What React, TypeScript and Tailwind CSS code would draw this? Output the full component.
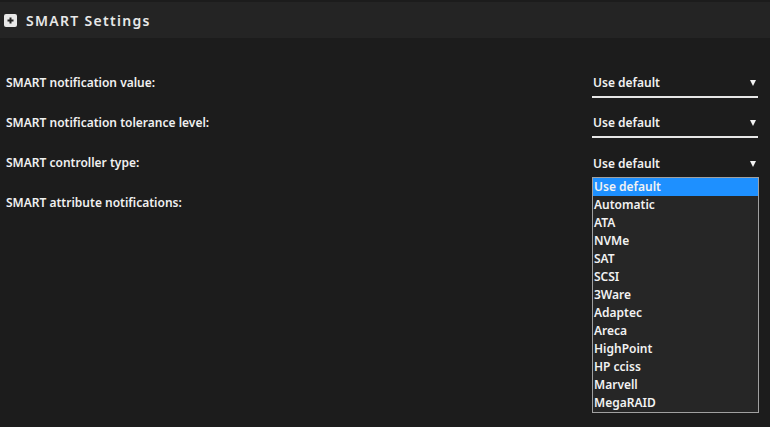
const options = [
  "Use default",
  "Automatic",
  "ATA",
  "NVMe",
  "SAT",
  "SCSI",
  "3Ware",
  "Adaptec",
  "Areca",
  "HighPoint",
  "HP cciss",
  "Marvell",
  "MegaRAID",
];

const rows = [
  "SMART notification value:",
  "SMART notification tolerance level:",
  "SMART controller type:",
  "SMART attribute notifications:",
];

function Caret() {
  return (
    <svg width="6" height="6" viewBox="0 0 6 6" className="shrink-0">
      <path d="M0 0 H6 L3 6 Z" fill="#f2f2f2" />
    </svg>
  );
}

function Select({ open, last }: { open?: boolean; last?: boolean }) {
  return (
    <div className="relative w-[166px]">
      <div
        className={`flex h-[28px] items-center justify-between pl-[1px] pr-[2px] text-[12px] font-semibold text-[#f2f2f2] ${
          last ? "" : "border-b-2 border-[#e6e6e6]"
        }`}
      >
        <span>Use default</span>
        <Caret />
      </div>
      {open && (
        <ul className="absolute left-0 top-[27px] z-10 w-[167px] border border-[#a0a0a0] bg-[#262626] text-[12px] font-semibold text-[#f2f2f2]">
          {options.map((o, i) => (
            <li
              key={o}
              className={`h-[18px] pl-[1px] leading-[18px] ${
                i === 0 ? "bg-[#1e90ff]" : ""
              }`}
            >
              {o}
            </li>
          ))}
        </ul>
      )}
    </div>
  );
}

export default function App() {
  return (
    <div
      className="h-[427px] w-[770px] overflow-hidden bg-[#1c1c1c] pt-[2px]"
      style={{ fontFamily: '"Noto Sans", "Open Sans", sans-serif' }}
    >
      <div className="flex h-[36px] items-center gap-[9px] bg-[#242424] pl-[4px]">
        <div className="flex h-[13px] w-[13px] items-center justify-center rounded-[2px] bg-[#e8e8e8]">
          <svg width="9" height="9" viewBox="0 0 9 9">
            <path d="M4.5 1.5 V7.5 M1.5 4.5 H7.5" stroke="#242424" strokeWidth="2" />
          </svg>
        </div>
        <span className="text-[14px] font-semibold tracking-[1.3px] text-[#e8e8e8]">
          SMART Settings
        </span>
      </div>
      <div className="flex flex-col pt-[32px]">
        {rows.map((r, i) => (
          <div key={r} className="flex h-[40px] items-start justify-between pl-[6px] pr-[12px]">
            <span className="pt-[4px] text-[12px] font-semibold text-[#f0f0f0]">{r}</span>
            {i < 3 && <Select open={i === 2} last={i === 2} />}
          </div>
        ))}
      </div>
    </div>
  );
}
